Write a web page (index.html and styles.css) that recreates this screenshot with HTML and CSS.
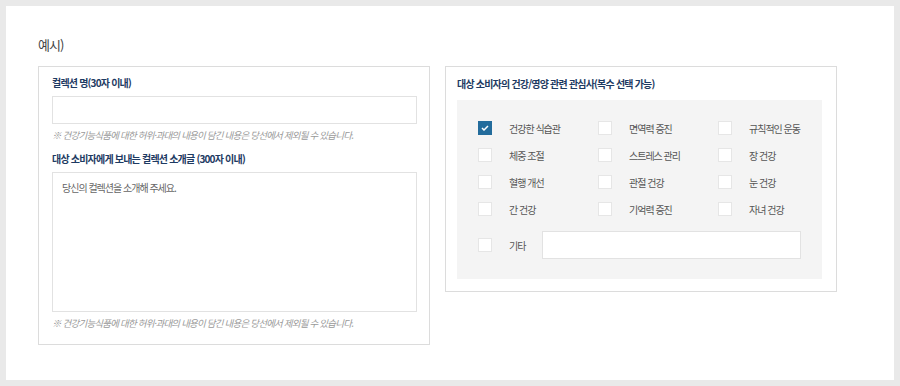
FILE: index.html
```html
<!DOCTYPE html>
<html lang="ko">
<head>
  <meta charset="UTF-8" />
  <meta name="viewport" content="width=device-width, initial-scale=1.0"/>
  <title>컬렉션 예시</title>
  <link rel="stylesheet" href="styles.css">
</head>
<body>
  <div class="panel">
    <h2 class="title">예시)</h2>
    <div class="boxes">
      <div class="box box-left">
        <p class="label">컬렉션 명(30자 이내)</p>
        <input type="text" class="field" />
        <p class="note">※ 건강기능식품에 대한 허위·과대의 내용이 담긴 내용은 당선에서 제외될 수 있습니다.</p>
        <p class="label label-gap">대상 소비자에게 보내는 컬렉션 소개글 (300자 이내)</p>
        <textarea class="area" placeholder="당신의 컬렉션을 소개해 주세요."></textarea>
        <p class="note">※ 건강기능식품에 대한 허위·과대의 내용이 담긴 내용은 당선에서 제외될 수 있습니다.</p>
      </div>

      <div class="box box-right">
        <p class="label">대상 소비자의 건강/영양 관련 관심사(복수 선택 가능)</p>
        <div class="choices">
          <div class="grid">
            <label class="opt"><span class="check on"><svg width="8" height="6" viewBox="0 0 8 6"><path d="M1 3 L3 5 L7 1" fill="none" stroke="#fff" stroke-width="1.5"/></svg></span>건강한 식습관</label>
            <label class="opt"><span class="check"></span>면역력 증진</label>
            <label class="opt"><span class="check"></span>규칙적인 운동</label>
            <label class="opt"><span class="check"></span>체중 조절</label>
            <label class="opt"><span class="check"></span>스트레스 관리</label>
            <label class="opt"><span class="check"></span>장 건강</label>
            <label class="opt"><span class="check"></span>혈행 개선</label>
            <label class="opt"><span class="check"></span>관절 건강</label>
            <label class="opt"><span class="check"></span>눈 건강</label>
            <label class="opt"><span class="check"></span>간 건강</label>
            <label class="opt"><span class="check"></span>기억력 증진</label>
            <label class="opt"><span class="check"></span>자녀 건강</label>
          </div>
          <div class="etc">
            <label class="opt etc-opt"><span class="check"></span>기타</label>
            <input type="text" class="field etc-field" />
          </div>
        </div>
      </div>
    </div>
  </div>
</body>
</html>
```

FILE: styles.css
```css
body { margin: 0; padding: 6px; background: #e9e9e9; font-family: "Noto Sans CJK KR", "Noto Sans", sans-serif; }
.panel { width: 888px; height: 374px; box-sizing: border-box; background: #fff; padding: 30px 0 0 32px; }
.title { margin: 0; font-size: 13px; line-height: 18px; font-weight: normal; color: #444; letter-spacing: -1px; }
.boxes { display: flex; align-items: flex-start; gap: 15px; margin-top: 12px; }
.box { width: 392px; box-sizing: border-box; border: 1px solid #dcdcdc; }
.box-left { padding: 8px 12px 14px 13px; }
.box-right { padding: 9px 14px 12px 11px; }
.label { margin: 0; font-size: 10px; line-height: 16px; font-weight: bold; color: #1d3a62; letter-spacing: -0.8px; }
.label-gap { margin-top: 9px; }
.field { display: block; width: 100%; height: 28px; box-sizing: border-box; margin: 5px 0 0; border: 1px solid #e2e2e2; background: #fff; outline: none; }
.area { display: block; width: 100%; height: 140px; box-sizing: border-box; margin: 5px 0 0; padding: 8px 9px; border: 1px solid #e2e2e2; resize: none; outline: none; font-family: inherit; font-size: 10px; line-height: 14px; letter-spacing: -1px; color: #666; }
.area::placeholder { color: #666; }
.note { margin: 4px 0 0; font-size: 9.5px; line-height: 14px; font-style: italic; color: #999; letter-spacing: -0.8px; }
.choices { margin-top: 8px; background: #f4f4f4; padding: 21px 21px 20px; }
.grid { display: grid; grid-template-columns: 120px 120px 120px; row-gap: 13px; }
.opt { display: flex; align-items: center; height: 14px; font-size: 10px; color: #555; letter-spacing: -1px; }
.check { width: 14px; height: 14px; box-sizing: border-box; border: 1px solid #e6e6e6; background: #fff; margin-right: 17px; display: flex; align-items: center; justify-content: center; flex: none; }
.check.on { background: #236c9c; border-color: #236c9c; }
.etc { display: flex; align-items: center; margin-top: 15px; }
.etc-opt { width: 64px; }
.etc-field { width: 259px; margin: 0; }
```
